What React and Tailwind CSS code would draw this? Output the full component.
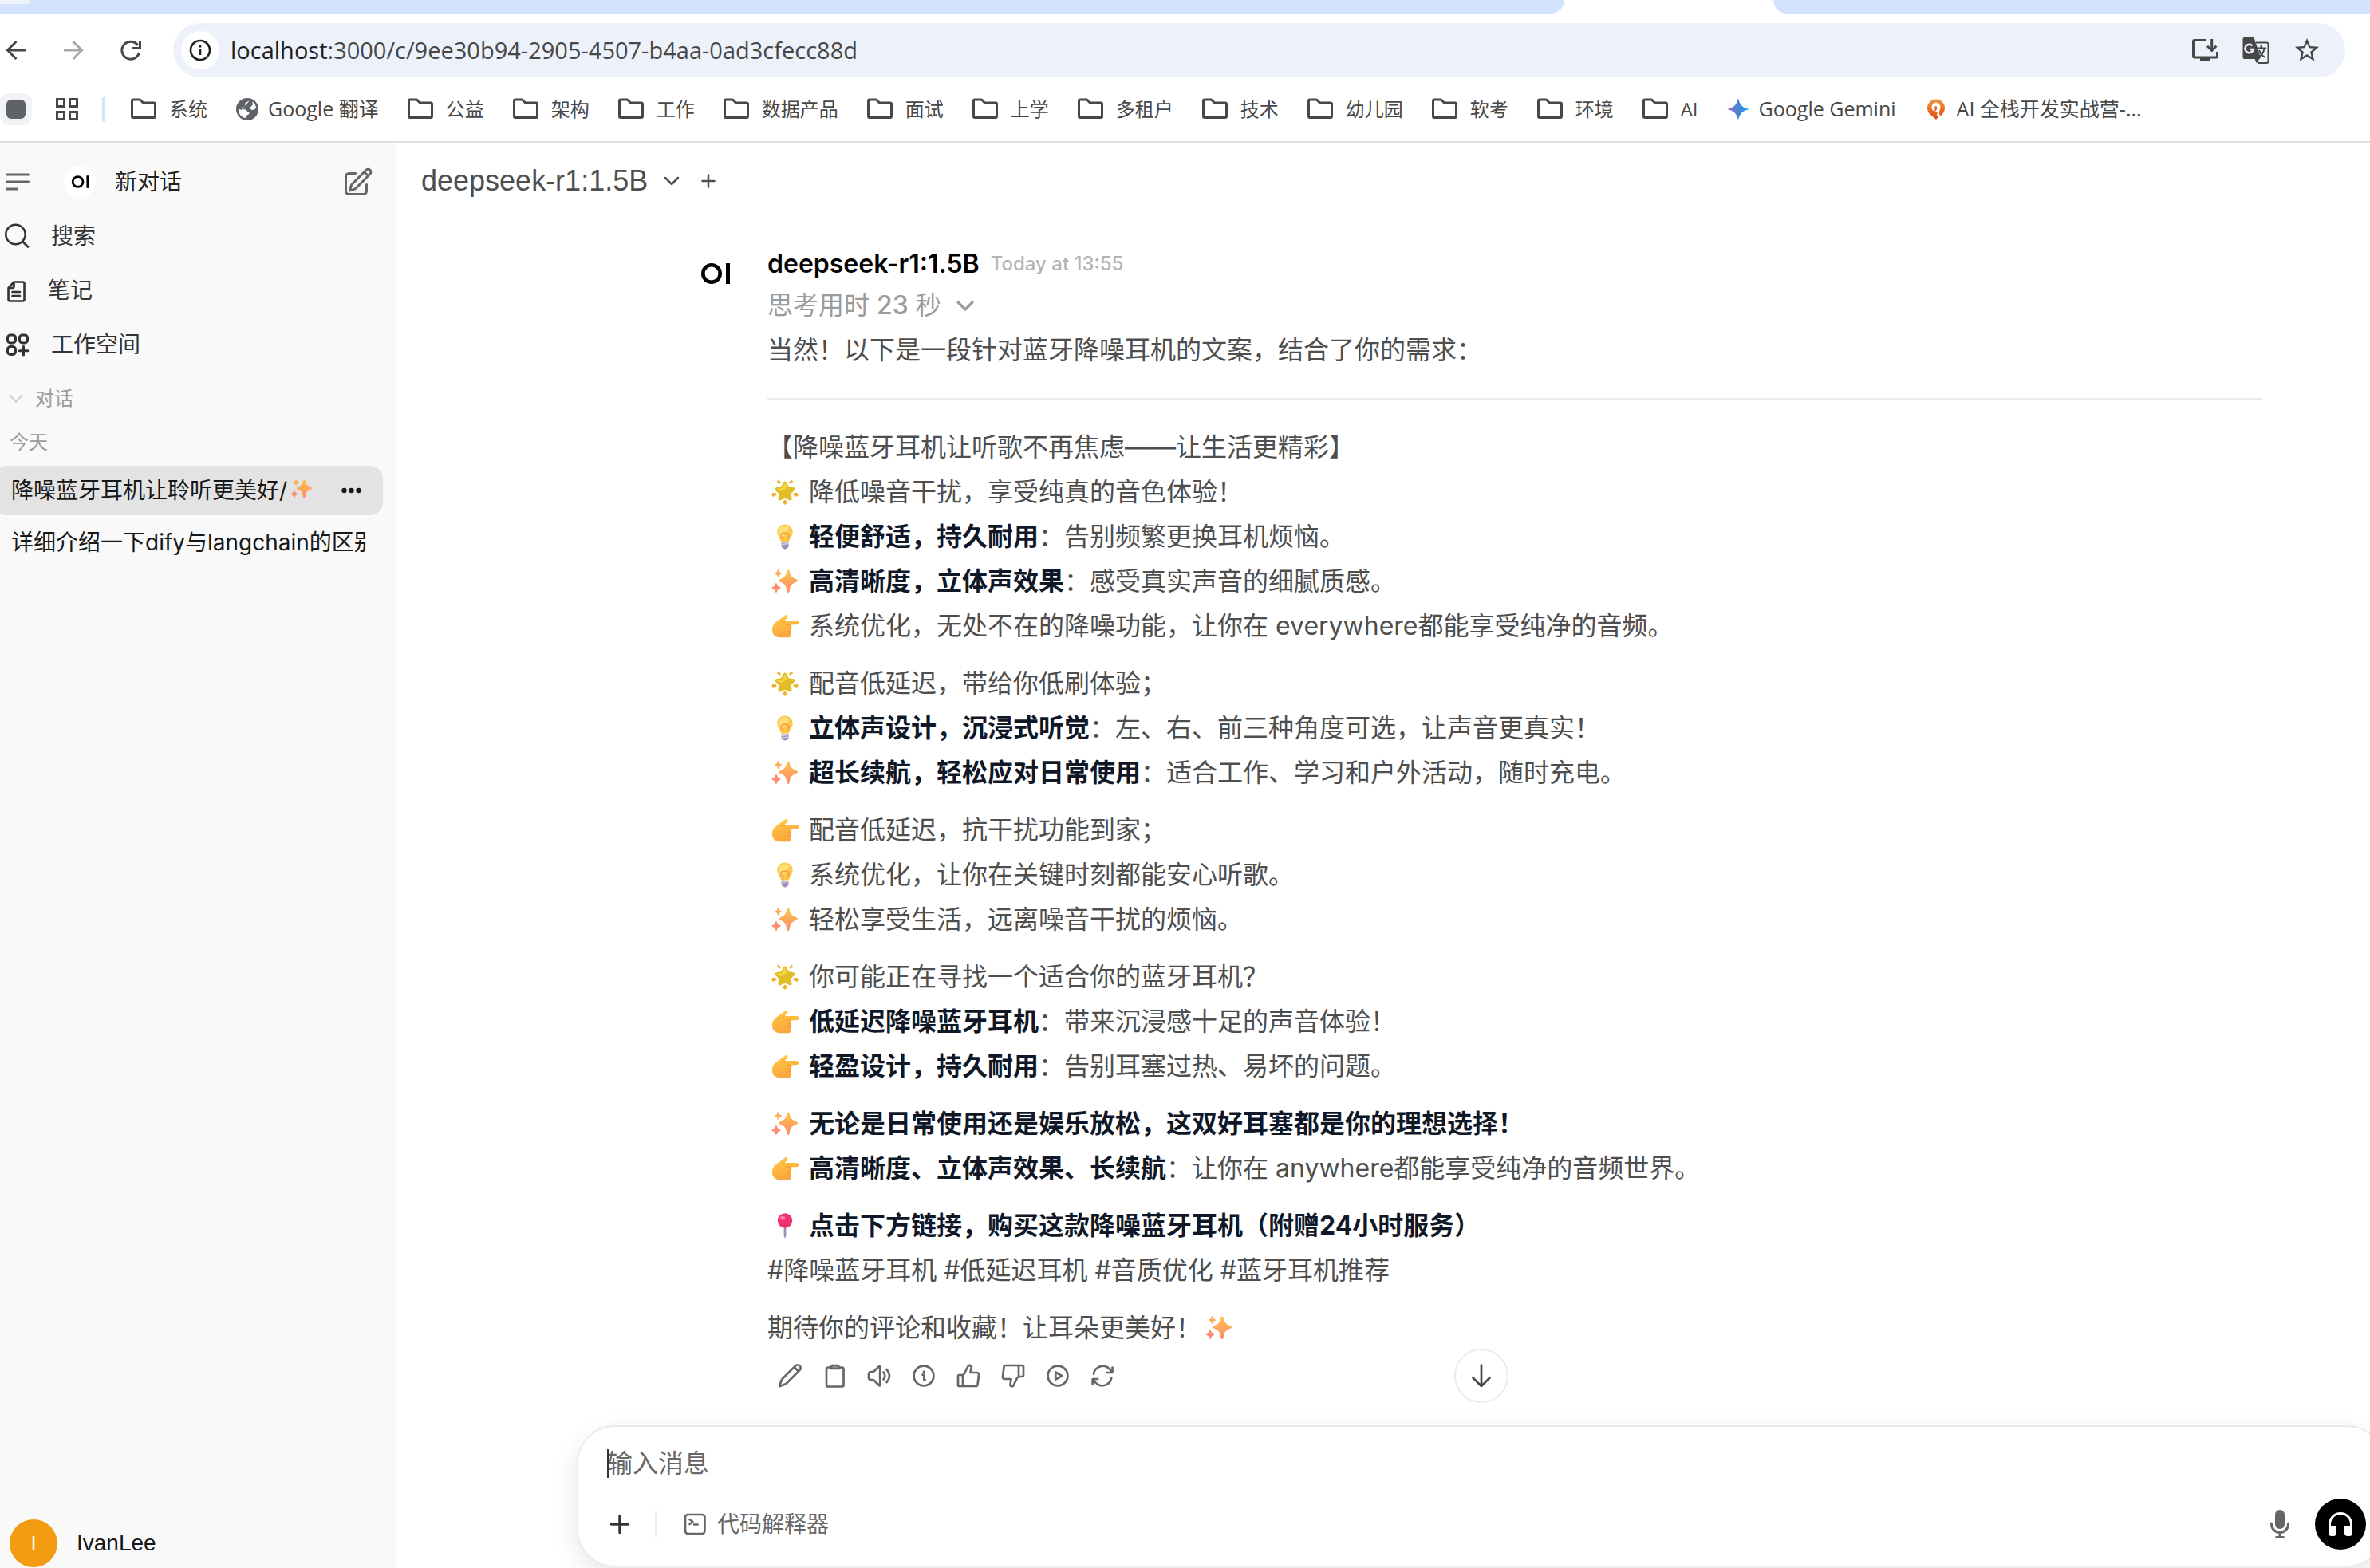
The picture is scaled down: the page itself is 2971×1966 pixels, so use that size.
import React from "react";

const UI = "font-['Inter','Noto_Sans_CJK_SC',sans-serif]";
const SYS = "font-['Open_Sans','Noto_Sans_CJK_SC',sans-serif]";

/* ---------- emoji drawings ---------- */

function SparkleShape() {
  return (
    <g>
      <defs>
        <linearGradient id="spark" x1="0" y1="0" x2="0" y2="1">
          <stop offset="0" stopColor="#fdc54c" />
          <stop offset="1" stopColor="#fd8a6b" />
        </linearGradient>
      </defs>
      <path fill="url(#spark)" d="M26 1.5q1.300 0 1.800 2c1 5.500 2.500 7.500 8.500 9.700q1.700.7 1.700 1.800t-1.700 1.800c-6 2.200-7.500 4.200-8.500 10.700q-.5 2.500-1.800 2.500t-1.800-2.500c-1-6.500-2.500-8.500-8-10.700q-1.700-.7-1.700-1.800t1.700-1.800c5.500-2.200 7-4.200 8-9.700q.5-2 1.800-2z" />
      <path fill="#fdb05a" d="M13.500 1q.6 0 .8.900c.5 2 1.200 2.700 3 3.300q.9.300.9.800t-.9.800c-1.800.6-2.500 1.300-3 3.300q-.2.900-.8.900t-.8-.9c-.5-2-1.200-2.700-3-3.300Q8.800 6.500 8.800 6t.9-.8c1.800-.6 2.500-1.300 3-3.300q.2-.9.800-.9z" />
      <path fill="#fd8d70" d="M11 18q.7 0 .9 1c.6 2.400 1.500 3.200 3.700 4q1 .4 1 1t-1 1c-2.200.8-3.100 1.600-3.700 4q-.2 1-.9 1t-.9-1c-.6-2.400-1.500-3.200-3.700-4q-1-.4-1-1t1-1c2.200-.8 3.100-1.600 3.700-4q.2-1 .9-1z" />
    </g>
  );
}

const EMOJI = {
  star: {
    label: "🌟",
    art: (
      <g>
        <path fill="#e3bd27" stroke="#e3bd27" strokeWidth="4" strokeLinejoin="round" d="M22 4.500l3.600 6.400 7 1.300-5 5.300 1 7L22 21.700 15.400 24.500l1-7-5-5.300 7-1.300z" />
        <path fill="#f3d63f" d="M22 4l2.800 6.600q-4 4-8 4.400L11.500 12l7-1.300z" />
        <g fill="#efb02a">
          <path d="M13 .5l4 3-1.200 2.200-3.800-2.200zM31 .5l-4 3 1.200 2.200 3.800-2.200zM6 17l4.800.3 1 2.200L7.200 22 5.500 20.200zM38 17l-4.800.3-1 2.200 4.600 2.500 1.700-1.800zM22 25.500l3.300 3.300L22 32l-3.300-3.200z" />
        </g>
      </g>
    ),
  },
  bulb: {
    label: "💡",
    art: (
      <g>
        <path fill="#fdc94c" d="M22 .5c5.600 0 9.700 4.200 9.700 9.400 0 5-3.300 6.600-4.700 12.600H17c-1.400-6-4.700-7.600-4.700-12.600C12.300 4.700 16.400.5 22 .5z" />
        <path fill="#fee07a" d="M21 2.500c-4 .3-6.800 3.400-6.800 7.200 0 3.800 2.300 5 3.500 8.300 4-4 8-9 9.800-12.500-1.500-2-3.700-3.200-6.500-3z" />
        <path fill="none" stroke="#f39a3a" strokeWidth="1.300" d="M20 22.500l-1.500-5.500c-3-2-1.500-6 3.500-6s6.500 4 3.500 6L24 22.500" />
        <path fill="#9a86b8" d="M17.500 23.500h9v5q0 1-1 1h-1q-.5 2-2.500 2t-2.500-2h-1q-1 0-1-1z" />
        <path stroke="#d9cfe6" strokeWidth="1.300" d="M17.500 25.500l9-.8M17.500 28l9-.8" />
      </g>
    ),
  },
  spark: { label: "✨", art: <SparkleShape /> },
  hand: {
    label: "👉",
    art: (
      <g>
        <defs>
          <linearGradient id="hand" x1="0" y1="0" x2="0.300" y2="1">
            <stop offset="0" stopColor="#ffcd45" />
            <stop offset="1" stopColor="#fba53c" />
          </linearGradient>
        </defs>
        <path fill="url(#hand)" d="M22.500 2.200c2.500-.8 4 1.400 2.400 3.300L21.600 9h15a2.500 2.500 0 0 1 0 5.200h-7.400c1.500 1 1.700 3 .4 4.300 1 1.300.9 3-.3 4 .8 1.200.7 2.700-.2 3.700 1 2-.2 4-2.600 4H15.500C10 30.200 6 26.500 6 21s2.500-8.800 7-11.700z" />
        <path fill="none" stroke="#f5982e" strokeWidth="1" strokeLinecap="round" d="M29 14.300h-5.500M29.300 18.600h-3.500M29 22.600h-3M21.500 9c-1.500 1.300-2.500 1.700-4 1.900" />
      </g>
    ),
  },
  pin: {
    label: "📍",
    art: (
      <g>
        <path fill="#9d8fb3" d="M20.600 15h2.800v14l-1.400 2.500-1.400-2.500z" />
        <circle cx="22" cy="9.500" r="9.200" fill="#f0316e" />
        <ellipse cx="19" cy="6.200" rx="3.200" ry="2.500" fill="#ff7aa5" />
      </g>
    ),
  },
};

function Emoji({ name, className = "mr-2 h-8 w-11" }) {
  return (
    <svg viewBox="0 0 44 32" role="img" aria-label={EMOJI[name].label} className={`-mt-1 inline-block shrink-0 align-middle ${className}`}>
      {EMOJI[name].art}
    </svg>
  );
}

/* ---------- icons ---------- */

function Line({ box = "0 0 40 40", w = 2.5, className = "size-10", children }) {
  return (
    <svg viewBox={box} fill="none" stroke="currentColor" strokeWidth={w} strokeLinecap="round" strokeLinejoin="round" aria-hidden="true" className={`shrink-0 ${className}`}>
      {children}
    </svg>
  );
}

function Logo({ className }) {
  return (
    <svg viewBox="0 0 40 40" aria-hidden="true" className={`shrink-0 ${className}`}>
      <circle cx="16" cy="20" r="10.700" fill="none" stroke="#000" strokeWidth="4.600" />
      <rect x="34" y="7" width="5" height="26" fill="#000" />
    </svg>
  );
}

const FolderIcon = () => (
  <svg viewBox="0 0 32 32" fill="none" stroke="#474747" strokeWidth="3" strokeLinejoin="round" aria-hidden="true" className="h-8 w-8 shrink-0">
    <path d="M1.500 5.500q0-1.500 1.500-1.500h8.500l4 4h13.500q1.500 0 1.500 1.500V25q0 1.500-1.500 1.500H3Q1.500 26.500 1.500 25z" />
  </svg>
);

const GlobeIcon = () => (
  <svg viewBox="0 0 28 28" aria-hidden="true" className="size-7 shrink-0">
    <circle cx="14" cy="14" r="14" fill="#5f6368" />
    <path fill="#fff" d="M17 3c-2 2-4 1.500-5.500 3.500-1 1.500.5 2.500-.5 4-1 1.300-4 .5-4 2.500 0 1.500 2 1 4 1.200 2.500.3 2 2.800 4.500 3.300 1.800.3 1 3-1 3.500-1.500.4-2 2-2 4C6.500 24.500 2.800 20 3 13.500l4 1.500M25 12c-1.500 2.500-4 3.500-6 2.500-2.200-1-1.500-3.500.5-4.500 1.800-.8 1.500-3 .5-5.500 2.800 1.500 4.700 4.300 5 7.500z" />
  </svg>
);

const GeminiIcon = () => (
  <svg viewBox="0 0 28 28" aria-hidden="true" className="size-7 shrink-0">
    <defs>
      <linearGradient id="gem" x1="0" y1="0.500" x2="1" y2="0.500">
        <stop offset="0.100" stopColor="#9470c4" />
        <stop offset="0.500" stopColor="#4a82d2" />
        <stop offset="1" stopColor="#12a5ef" />
      </linearGradient>
    </defs>
    <path fill="url(#gem)" d="M14 0c1.500 8 5.500 12.500 14 14-8.500 1.500-12.500 6-14 14-1.500-8-5.500-12.500-14-14C8.500 12.500 12.500 8 14 0z" />
  </svg>
);

const CourseIcon = () => (
  <svg viewBox="0 0 28 28" aria-hidden="true" className="size-7 shrink-0">
    <defs>
      <linearGradient id="course" x1="0" y1="0" x2="0" y2="1">
        <stop offset="0" stopColor="#ef9a3f" />
        <stop offset="1" stopColor="#dc5618" />
      </linearGradient>
    </defs>
    <circle cx="14" cy="12.500" r="11" fill="url(#course)" />
    <ellipse cx="14" cy="11.500" rx="5.500" ry="6" fill="#fff" />
    <path fill="#fff" d="M17 12q2 4 1 9l5 3-4 2.500-4-5z" />
    <path fill="#e0641c" d="M13.500 10q1.800 0 1.800 3-.8 3.500-3.600 4.500 1.300-2.500.6-5.500.2-2 1.200-2z" />
    <path fill="#dc5618" d="M9.500 23h8l-3.500 4z" />
  </svg>
);

const BOOKMARKS = [
  ["系统", FolderIcon],
  ["Google 翻译", GlobeIcon],
  ["公益", FolderIcon],
  ["架构", FolderIcon],
  ["工作", FolderIcon],
  ["数据产品", FolderIcon],
  ["面试", FolderIcon],
  ["上学", FolderIcon],
  ["多租户", FolderIcon],
  ["技术", FolderIcon],
  ["幼儿园", FolderIcon],
  ["软考", FolderIcon],
  ["环境", FolderIcon],
  ["AI", FolderIcon],
  ["Google Gemini", GeminiIcon],
  ["AI 全栈开发实战营-...", CourseIcon],
];

function BrowserChrome() {
  return (
    <div className={`shrink-0 border-b-2 border-[#e0e0e0] bg-white text-[#474747] ${SYS}`}>
      <div className="flex h-[17px] justify-between">
        <div className="w-[66%] rounded-br-3xl bg-[#d3e2fd]">
          <div className="h-[5px] w-[38px] rounded-br-2xl bg-[#edf2fb]" />
        </div>
        <div className="w-[748px] rounded-bl-3xl bg-[#d3e2fd]" />
      </div>

      <div className="flex items-center py-3 pr-[31px]">
        <button aria-label="后退" className="ml-1 text-[#474747]">
          <Line box="0 0 32 32" w="3" className="size-8"><path strokeLinecap="butt" strokeLinejoin="miter" d="M28 16H6M16.500 5L5.500 16l11 11" /></Line>
        </button>
        <button aria-label="前进" className="ml-10 text-[#a8a8a8]">
          <Line box="0 0 32 32" w="3" className="size-8"><path strokeLinecap="butt" strokeLinejoin="miter" d="M4 16h22M15.500 5l11 11-11 11" /></Line>
        </button>
        <button aria-label="重新加载" className="ml-10 text-[#474747]">
          <Line box="0 0 32 32" w="3" className="size-8"><path strokeLinecap="butt" strokeLinejoin="miter" d="M26.500 19A11 11 0 1 1 25 10M27.500 4v9.500H18" /></Line>
        </button>
        <div className="ml-[37px] flex h-[68px] flex-1 items-center rounded-full bg-[#ecf1fa] pl-[10px] pr-[30px]">
          <button aria-label="查看网站信息" className="flex size-12 items-center justify-center rounded-full bg-white text-[#1f1f1f]">
            <Line box="0 0 28 28" w="2.600" className="size-7"><circle cx="14" cy="14" r="12" /><path strokeLinecap="butt" d="M14 12.500V20M14 8v2.600" /></Line>
          </button>
          <div className="ml-[14px] flex-1 text-[29px] leading-10 text-[#474747]">
            <span className="text-[#1f1f1f]">localhost</span>:3000/c/9ee30b94-2905-4507-b4aa-0ad3cfecc88d
          </div>
          <div className="flex items-center gap-7">
            <button aria-label="安装应用">
              <svg viewBox="0 0 36 36" fill="none" stroke="#474747" strokeWidth="3" aria-hidden="true" className="size-9">
                <path d="M20 5.500H5q-1.500 0-1.500 1.500v18.500q0 1.500 1.500 1.500h27q1.500 0 1.500-1.500V20" />
                <path d="M26.700 4v14M21 12.800l5.700 5.700 5.700-5.700" />
                <path fill="#474747" stroke="none" d="M12 26h12v6H12z" />
              </svg>
            </button>
            <button aria-label="翻译此页">
              <svg viewBox="0 0 36 36" aria-hidden="true" className="size-9">
                <path d="M18 8.500h13.500q2 0 2 2V32q0 2-2 2H21l-3-5" fill="none" stroke="#474747" strokeWidth="2" />
                <path fill="#474747" d="M3 2h11.500q1 0 1.300 1L24 27l-5.500 7L16.500 29H3.500Q1.500 29 1.500 27V4q0-2 2-2z" />
                <path d="M13.500 12.500A5.200 5.200 0 1 0 14.700 17H10.300" fill="none" stroke="#ecf1fa" strokeWidth="2.500" />
                <path d="M24.500 12v3M19 15.500h12M28.500 16c-1 5-3.500 8.500-7 10.500M22 18c1.500 4 4 7 7.500 9" fill="none" stroke="#474747" strokeWidth="2" />
              </svg>
            </button>
            <button aria-label="为此标签页添加书签">
              <svg viewBox="0 0 24 24" fill="#474747" aria-hidden="true" className="size-9">
                <path d="M22 9.240l-7.190-.62L12 2 9.190 8.630 2 9.240l5.460 4.730L5.820 21 12 17.270 18.180 21l-1.630-7.030L22 9.240zM12 15.400l-3.760 2.270 1-4.280-3.320-2.880 4.380-.38L12 6.100l1.710 4.040 4.380.38-3.320 2.880 1 4.280L12 15.400z" />
              </svg>
            </button>
          </div>
        </div>
      </div>

      <nav aria-label="书签栏" className="flex h-[68px] items-start pt-2 text-2xl">
        <button aria-label="扩展" className="flex size-10 items-center justify-center rounded-xl bg-[#f1f3f4]">
          <span className="size-6 rounded-md bg-[#5f6368]" />
        </button>
        <button aria-label="应用" className="ml-[30px] mt-[6px]">
          <svg viewBox="0 0 28 28" fill="none" stroke="#474747" strokeWidth="3" aria-hidden="true" className="size-7">
            <path d="M1.500 1.500h9v9h-9zM17.500 1.500h9v9h-9zM1.500 17.500h9v9h-9zM17.500 17.500h9v9h-9z" />
          </svg>
        </button>
        <span className="ml-[30px] mt-1 h-8 w-1 rounded-full bg-[#d3e2fd]" />
        <ul className="ml-8 flex items-center gap-9">
          {BOOKMARKS.map(([label, Icon]) => (
            <li key={label}>
              <a href="#" className={`flex h-10 items-center whitespace-nowrap ${Icon === FolderIcon ? "gap-4" : "gap-3 text-[25px]"}`}>
                <Icon />
                <span>{label}</span>
              </a>
            </li>
          ))}
        </ul>
      </nav>
    </div>
  );
}

function Sidebar() {
  return (
    <aside className="flex w-[496px] shrink-0 flex-col bg-[#f9f9f9] pt-[15px] text-[28px] text-[#333]">
      <div className="flex h-[68px] items-center">
        <button aria-label="切换侧边栏" className="ml-1 text-[#666]">
          <Line box="0 0 36 36" w="3" className="size-9"><path d="M4.500 9h27M4.500 18h27M4.500 27h13" /></Line>
        </button>
        <a href="#" className="ml-10 flex flex-1 items-center text-[#1f1f1f]">
          <span className="flex size-10 items-center justify-center rounded-full bg-white"><Logo className="size-6" /></span>
          <span className="ml-6">新对话</span>
        </a>
        <button aria-label="新对话" className="mr-7 text-[#666]">
          <Line box="0 0 38 38" w="3" className="size-[38px]">
            <path d="M15.500 8.500h-8a4 4 0 0 0-4 4v18a4 4 0 0 0 4 4h18a4 4 0 0 0 4-4v-8" />
            <path d="M8.500 30l1.500-5.500q.4-1.500 1.500-2.600L29 4.300a3.400 3.400 0 0 1 4.900 4.900L16.500 26.800q-1.100 1.100-2.600 1.600zM27 7l4.500 4.500" />
          </Line>
        </button>
      </div>
      <button className="flex h-[68px] items-center text-left">
        <Line w="2.600" className="ml-0.5 size-10"><circle cx="17.500" cy="18" r="12.200" /><path d="M26.500 27L33 33.500" /></Line>
        <span className="ml-[22px]">搜索</span>
      </button>
      <a href="#" className="flex h-[68px] items-center">
        <Line w="2.600"><path d="M10.500 17l7-7.500H28.500q2 0 2 2V31.500q0 2-2 2H12.500q-2 0-2-2zM10.500 17H15.500q2 0 2-2V9.500M15.500 22h9.500M15.500 27h9.500" /></Line>
        <span className="ml-5">笔记</span>
      </a>
      <a href="#" className="flex h-[68px] items-center">
        <Line w="3" className="ml-0.5 size-10">
          <rect x="7.500" y="8" width="10" height="10" rx="3.500" /><rect x="22.500" y="8" width="10" height="10" rx="3.500" /><rect x="7.500" y="22.500" width="10" height="10" rx="3.500" /><path d="M27.500 22.500v10.500M22.300 27.700h10.500" />
        </Line>
        <span className="ml-[22px]">工作空间</span>
      </a>
      <button className="flex h-[68px] items-center text-2xl text-[#9b9b9b]">
        <Line box="0 0 24 24" w="2.200" className="ml-2 size-6 text-[#cdcdcd]"><path d="M4.500 8l7.500 7.500L19.500 8" /></Line>
        <span className="ml-3">对话</span>
      </button>
      <div className="mb-2 flex h-[42px] items-center pl-3 text-2xl text-[#9b9b9b]">今天</div>
      <div className="-ml-2 mr-4 flex h-[62px] items-center rounded-2xl bg-[#e3e3e3] pl-[22px] pr-6 text-[#171717]">
        <a href="#" className="flex flex-1 items-center whitespace-nowrap">
          降噪蓝牙耳机让聆听更美好/<Emoji name="spark" className="h-7 w-9" />
        </a>
        <button aria-label="更多">
          <svg viewBox="0 0 32 32" fill="currentColor" aria-hidden="true" className="size-8"><circle cx="7.500" cy="16" r="3.200" /><circle cx="16.500" cy="16" r="3.200" /><circle cx="25.500" cy="16" r="3.200" /></svg>
        </button>
      </div>
      <div className="mt-[3px] flex h-[62px] items-center pl-[14px] pr-9 text-[#171717]">
        <a href="#" className="w-full overflow-hidden whitespace-nowrap">详细介绍一下dify与langchain的区别</a>
      </div>
      <button className="mb-px mt-auto flex items-center pl-3 text-[#171717]">
        <span className="flex size-[60px] items-center justify-center rounded-full bg-[#f39c12] font-['Liberation_Sans',sans-serif] text-2xl text-white">I</span>
        <span className="ml-6 font-['Liberation_Sans',sans-serif]">IvanLee</span>
      </button>
    </aside>
  );
}

/* Each paragraph is a list of lines: [emoji, bold text, plain text]. */
const PARAGRAPHS = [
  [
    [null, "", "【降噪蓝牙耳机让听歌不再焦虑——让生活更精彩】"],
    ["star", "", "降低噪音干扰，享受纯真的音色体验！"],
    ["bulb", "轻便舒适，持久耐用", "：告别频繁更换耳机烦恼。"],
    ["spark", "高清晰度，立体声效果", "：感受真实声音的细腻质感。"],
    ["hand", "", "系统优化，无处不在的降噪功能，让你在 everywhere都能享受纯净的音频。"],
  ],
  [
    ["star", "", "配音低延迟，带给你低刷体验；"],
    ["bulb", "立体声设计，沉浸式听觉", "：左、右、前三种角度可选，让声音更真实！"],
    ["spark", "超长续航，轻松应对日常使用", "：适合工作、学习和户外活动，随时充电。"],
  ],
  [
    ["hand", "", "配音低延迟，抗干扰功能到家；"],
    ["bulb", "", "系统优化，让你在关键时刻都能安心听歌。"],
    ["spark", "", "轻松享受生活，远离噪音干扰的烦恼。"],
  ],
  [
    ["star", "", "你可能正在寻找一个适合你的蓝牙耳机？"],
    ["hand", "低延迟降噪蓝牙耳机", "：带来沉浸感十足的声音体验！"],
    ["hand", "轻盈设计，持久耐用", "：告别耳塞过热、易坏的问题。"],
  ],
  [
    ["spark", "无论是日常使用还是娱乐放松，这双好耳塞都是你的理想选择！", ""],
    ["hand", "高清晰度、立体声效果、长续航", "：让你在 anywhere都能享受纯净的音频世界。"],
  ],
  [
    ["pin", "点击下方链接，购买这款降噪蓝牙耳机（附赠24小时服务）", ""],
    [null, "", "#降噪蓝牙耳机 #低延迟耳机 #音质优化 #蓝牙耳机推荐"],
  ],
];

const THUMB = (
  <path d="M13 33V19M8.500 19H13l1.800-1.500L19.500 8q.7-1.300 2-1.200 2.300.3 2 2.700l-1 6.500h8q2.800 0 2.500 3L31.500 31q-.3 2-2 2h-21q-1.500 0-1.500-1.500v-11Q7 19 8.500 19z" />
);

const ACTIONS = [
  ["编辑", <path d="M7.200 33.200l2-6.700q.5-1.500 1.600-2.700L27.200 7.400a3.800 3.800 0 0 1 5.400 5.400L16.200 29.200q-1.200 1.100-2.700 1.600zM26 9.500l4.500 4.500" />],
  ["复制", <g><path d="M14 9.500h-2q-2 0-2 2v20q0 2 2 2h17.500q2 0 2-2v-20q0-2-2-2H27" /><path fill="#aaa" d="M17 7h7.500l2 3.800H15z" /></g>],
  ["朗读", <path d="M21.200 9v22.500q0 1.500-1.200.5L14 26q-1-1-2.500-1H10q-3 0-3-3v-4q0-3 3-3h1.500q1.500 0 2.500-1l6-5.700q1.200-.8 1.200.7zM25.500 15.500q3.500 4.500 0 9M29.500 12q7 8 0 16" />],
  ["生成信息", <g><circle cx="20" cy="20" r="12.400" /><path d="M18.500 18.700H20.300v6.500h1.300M20 14.900v.2" /></g>],
  ["赞同", THUMB],
  ["反对", <g transform="rotate(180 20 20)">{THUMB}</g>],
  ["继续生成", <g><circle cx="20" cy="20" r="12.400" /><path d="M17.300 15.500v9.200l8-4.600z" /></g>],
  ["重新生成", <path d="M9 17.800a11.500 11.500 0 0 1 22-3M32.500 9.500V16H26M31.300 22.300a11.500 11.500 0 0 1-22 3M7.700 30.500V24h6.500" />],
];

function Message() {
  return (
    <article className="flex pl-[380px] pr-[136px] pt-8">
      <Logo className="mt-4 size-10" />
      <div className="ml-[46px] min-w-0 flex-1 text-[32px] leading-[56px] text-[#4e4e4e]">
        <div className="flex h-12 items-center">
          <h2 className="font-semibold text-black">deepseek-r1:1.5B</h2>
          <time className="ml-[14px] text-2xl font-medium text-[#b4b4b4]">Today at 13:55</time>
        </div>
        <button className="flex items-center leading-[56px] text-[#9b9b9b]">
          <span>思考用时 <span className="font-medium">23</span> 秒</span>
          <Line box="0 0 28 28" w="3.200" className="ml-4 size-7"><path d="M5 10l9 9 9-9" /></Line>
        </button>
        <p>当然！以下是一段针对蓝牙降噪耳机的文案，结合了你的需求：</p>
        <hr className="my-8 h-0.5 border-0 bg-[#ebebeb]" />
        {PARAGRAPHS.map((lines, i) => (
          <p key={i} className="mb-4">
            {lines.map(([emoji, bold, text], j) => (
              <span key={j} className="block h-14">
                {emoji && <Emoji name={emoji} />}
                {bold && <strong className="font-bold text-[#101828]">{bold}</strong>}
                {text}
              </span>
            ))}
          </p>
        ))}
        <p className="h-14">期待你的评论和收藏！让耳朵更美好！<Emoji name="spark" /></p>
        <div className="mt-1 flex text-[#666]">
          {ACTIONS.map(([label, art]) => (
            <button key={label} aria-label={label} className="flex size-14 items-center justify-center">
              <Line w="2.700">{art}</Line>
            </button>
          ))}
        </div>
      </div>
    </article>
  );
}

function Composer() {
  return (
    <div className="relative mb-px ml-[227px] mr-[-19px] mt-auto">
      <button aria-label="滚动到底部" className="absolute bottom-full left-1/2 mb-7 flex size-[68px] -translate-x-1/2 items-center justify-center rounded-full border-2 border-[#ebebeb] bg-white text-[#474747]">
        <Line w="2.700"><path d="M20 6.500v26M9.500 22.500L20 33l10.500-10.500" /></Line>
      </button>
      <form className="rounded-[48px] border-2 border-[#ebebeb] bg-white pb-5 pl-9 pr-[22px] pt-[22px] shadow-[0_10px_30px_rgba(0,0,0,0.1)]">
        <div className="relative h-12">
          <textarea rows={1} aria-label="输入消息" placeholder="输入消息" className="block h-12 w-full resize-none bg-transparent text-[32px] leading-[48px] outline-none placeholder:text-[#676767]" />
          <span className="absolute left-0 top-[6px] h-9 w-0.5 bg-[#333]" />
        </div>
        <div className="mt-5 flex items-center text-[28px] text-[#676767]">
          <button type="button" aria-label="更多" className="-ml-1 text-[#333]">
            <Line w="3.500"><path d="M20 9.500v21M9.500 20h21" /></Line>
          </button>
          <span className="ml-6 h-8 w-0.5 bg-[#f0f0f0]" />
          <button type="button" className="ml-8 flex items-center">
            <Line box="0 0 32 32" w="2.600" className="size-8"><rect x="4" y="4" width="24.500" height="24" rx="3.500" /><path d="M9.500 10l4 3-4 3M15 16.500h4.500" /></Line>
            <span className="ml-3">代码解释器</span>
          </button>
          <button type="button" aria-label="语音输入" className="ml-auto">
            <svg viewBox="0 0 40 40" aria-hidden="true" className="size-10">
              <rect x="14" y="2" width="12" height="24" rx="6" fill="#666" />
              <path d="M9.500 19v1a10.500 10.500 0 0 0 21 0v-1M20 30.500v6M15.500 36.500h9" fill="none" stroke="#666" strokeWidth="3" strokeLinecap="round" />
            </svg>
          </button>
          <button type="button" aria-label="语音通话" className="ml-6 flex size-16 items-center justify-center rounded-full bg-black">
            <svg viewBox="0 0 32 32" aria-hidden="true" className="size-8">
              <path fill="#fff" d="M1 16a15 15 0 0 1 30 0v11q0 4-4 4h-2q-4 0-4-4V18h7v-2a12 12 0 0 0-24 0v2h7v9q0 4-4 4H5q-4 0-4-4z" />
            </svg>
          </button>
        </div>
      </form>
    </div>
  );
}

export default function App() {
  return (
    <div className={`flex min-h-screen flex-col overflow-hidden bg-white ${UI}`}>
      <BrowserChrome />
      <div className="flex flex-1">
        <Sidebar />
        <main className="flex min-w-0 flex-1 flex-col overflow-hidden">
          <header className="flex h-24 shrink-0 items-center pl-8 text-[#4e4e4e]">
            <button className="flex items-center font-['Liberation_Sans',sans-serif] text-4xl">
              <span>deepseek-r1:1.5B</span>
              <Line box="0 0 28 28" w="2.500" className="ml-4 size-7"><path d="M6 10l8 8 8-8" /></Line>
            </button>
            <button aria-label="添加模型" className="ml-4">
              <Line box="0 0 32 32" w="2.500" className="size-8"><path d="M16 8.500v15M8.500 16h15" /></Line>
            </button>
          </header>
          <Message />
          <Composer />
        </main>
      </div>
    </div>
  );
}
